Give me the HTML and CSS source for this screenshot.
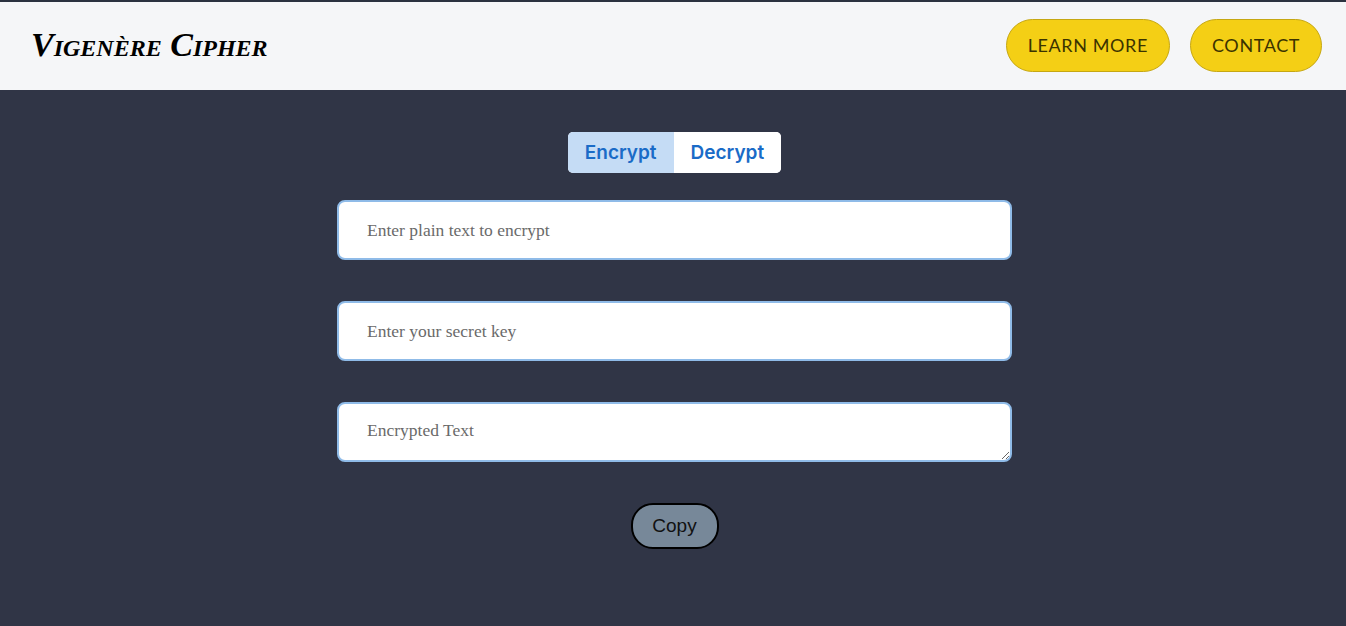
FILE: index.html
```html
<!DOCTYPE html>
<html lang="en">
<head>
<meta charset="utf-8">
<title>Vigenère Cipher</title>
<link rel="stylesheet" href="styles.css">
</head>
<body>
<header class="topbar">
  <h1 class="brand">Vigenère Cipher</h1>
  <nav class="nav">
    <a class="pill" href="#">LEARN MORE</a>
    <a class="pill" href="#">CONTACT</a>
  </nav>
</header>
<main class="main">
  <div class="toggle">
    <button class="tab active">Encrypt</button>
    <button class="tab">Decrypt</button>
  </div>
  <form class="form">
    <input class="field" type="text" placeholder="Enter plain text to encrypt">
    <input class="field" type="text" placeholder="Enter your secret key">
    <textarea class="field area" placeholder="Encrypted Text"></textarea>
    <button type="button" class="copy">Copy</button>
  </form>
</main>
</body>
</html>
```
FILE: styles.css
```css
html, body {
  margin: 0;
  padding: 0;
  height: 100%;
}
body {
  background: #303546;
  border-top: 2px solid #2b3240;
  box-sizing: border-box;
}
.topbar {
  background: #f5f6f8;
  height: 88px;
  display: flex;
  align-items: center;
  justify-content: space-between;
  padding: 0 24px 0 31px;
}
.brand {
  margin: 0 0 2px 0;
  font-family: "Liberation Serif", "Times New Roman", serif;
  font-style: italic;
  font-weight: bold;
  font-variant: small-caps;
  font-size: 34px;
  color: #000;
}
.nav {
  display: flex;
  gap: 20px;
  margin-bottom: 1px;
}
.pill {
  display: inline-flex;
  align-items: center;
  justify-content: center;
  height: 53px;
  box-sizing: border-box;
  padding: 0 21px 2px;
  background: #f4cf15;
  border: 1px solid #c6a712;
  border-radius: 27px;
  color: #3b3300;
  text-decoration: none;
  font-family: "Lato", "Noto Sans", sans-serif;
  font-size: 18px;
  letter-spacing: 0.6px;
}
.main {
  display: flex;
  flex-direction: column;
  align-items: center;
  padding-top: 42px;
}
.toggle {
  display: flex;
  border-radius: 5px;
  overflow: hidden;
  background: #fff;
  margin-left: 3px;
}
.tab {
  border: 0;
  margin: 0;
  height: 41px;
  padding: 0 17px;
  background: #fff;
  color: #1a6bc7;
  font-family: "Inter", "Noto Sans", sans-serif;
  font-weight: 600;
  font-size: 19px;
}
.tab.active {
  background: #c5dcf5;
}
.form {
  width: 675px;
  margin-top: 27px;
  display: flex;
  flex-direction: column;
  align-items: center;
  gap: 41px;
  margin-left: 3px;
}
.field {
  box-sizing: border-box;
  width: 675px;
  height: 60px;
  border: 2px solid #8fbbe8;
  border-radius: 8px;
  background: #fff;
  padding: 0 28px;
  font-family: "Liberation Serif", "Times New Roman", serif;
  font-size: 17.5px;
  color: #333;
  outline: none;
}
.field::placeholder {
  color: #6a6a6a;
}
.area {
  resize: vertical;
  padding-top: 16px;
  display: block;
}
.copy {
  width: 88px;
  height: 46px;
  background: #778899;
  border: 2px solid #000;
  border-radius: 22px;
  font-family: "Liberation Sans", Arial, sans-serif;
  font-size: 19px;
  color: #111;
}
```
